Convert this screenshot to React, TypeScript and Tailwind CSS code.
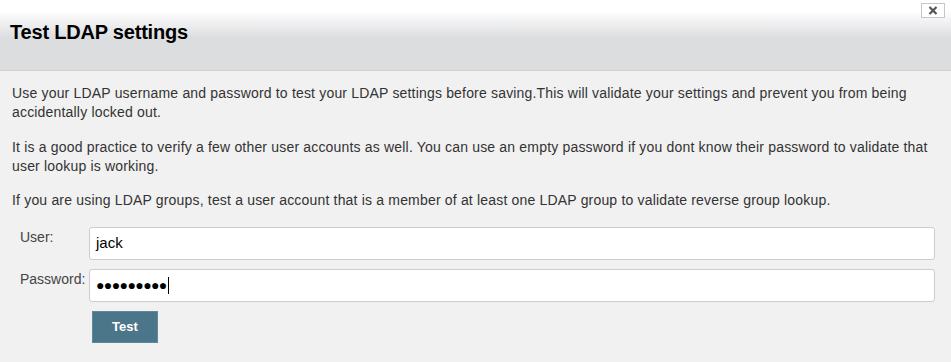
import React from 'react';

const font = { fontFamily: '"Liberation Sans", Arial, sans-serif' };

const App: React.FC = () => {
  return (
    <div className="w-[951px] h-[362px] bg-[#f1f1f1] text-[#333] overflow-hidden" style={font}>
      <div className="relative h-[71px] border-b border-[#cfcfcf] bg-gradient-to-b from-white from-[15%] to-[#dcdddf] to-[55%]">
        <h1 className="pl-[10px] pt-[20px] text-[20px] leading-[24px] font-bold tracking-[-0.2px] text-black">Test LDAP settings</h1>
        <button className="absolute right-[6px] top-[3px] w-[24px] h-[15px] border border-[#c6c6c6] bg-white flex items-center justify-center">
          <svg width="10" height="9" viewBox="0 0 10 9">
            <path d="M1.5 1 L8.5 8 M8.5 1 L1.5 8" stroke="#555" strokeWidth="2.2" />
          </svg>
        </button>
      </div>

      <div className="pl-[12px] pr-[16px] pt-[13px] text-[14px] leading-[19px] tracking-[0.18px]">
        <p className="mb-[16px]">
          Use your LDAP username and password to test your LDAP settings before saving.This will validate your settings and prevent you from being accidentally locked out.
        </p>
        <p className="mb-[15px]">
          It is a good practice to verify a few other user accounts as well. You can use an empty password if you dont know their password to validate that user lookup is working.
        </p>
        <p>
          If you are using LDAP groups, test a user account that is a member of at least one LDAP group to validate reverse group lookup.
        </p>
      </div>

      <div className="pl-[20px] pr-[16px] pt-[17px] flex flex-col gap-[9px] text-[14px]">
        <div className="flex">
          <label className="w-[69px] pt-[2px] leading-[17px] text-[#444]">User:</label>
          <div className="flex-1 h-[33px] bg-white border border-[#cdcdcd] rounded-[3px] flex items-center px-[6px] text-[15px] text-black">
            jack
          </div>
        </div>
        <div className="flex">
          <label className="w-[69px] pt-[2px] leading-[17px] text-[#444]">Password:</label>
          <div className="flex-1 h-[33px] bg-white border border-[#cdcdcd] rounded-[3px] flex items-center px-[6px] text-black">
            <span className="text-[14px] tracking-[-0.6px]">●●●●●●●●●</span>
            <span className="ml-[1px] w-[1px] h-[17px] bg-black" />
          </div>
        </div>
        <div className="pl-[72px]">
          <button className="w-[66px] h-[32px] bg-[#4b7589] border border-[#5e899c] text-white font-bold text-[13px]">
            Test
          </button>
        </div>
      </div>
    </div>
  );
};

export default App;
